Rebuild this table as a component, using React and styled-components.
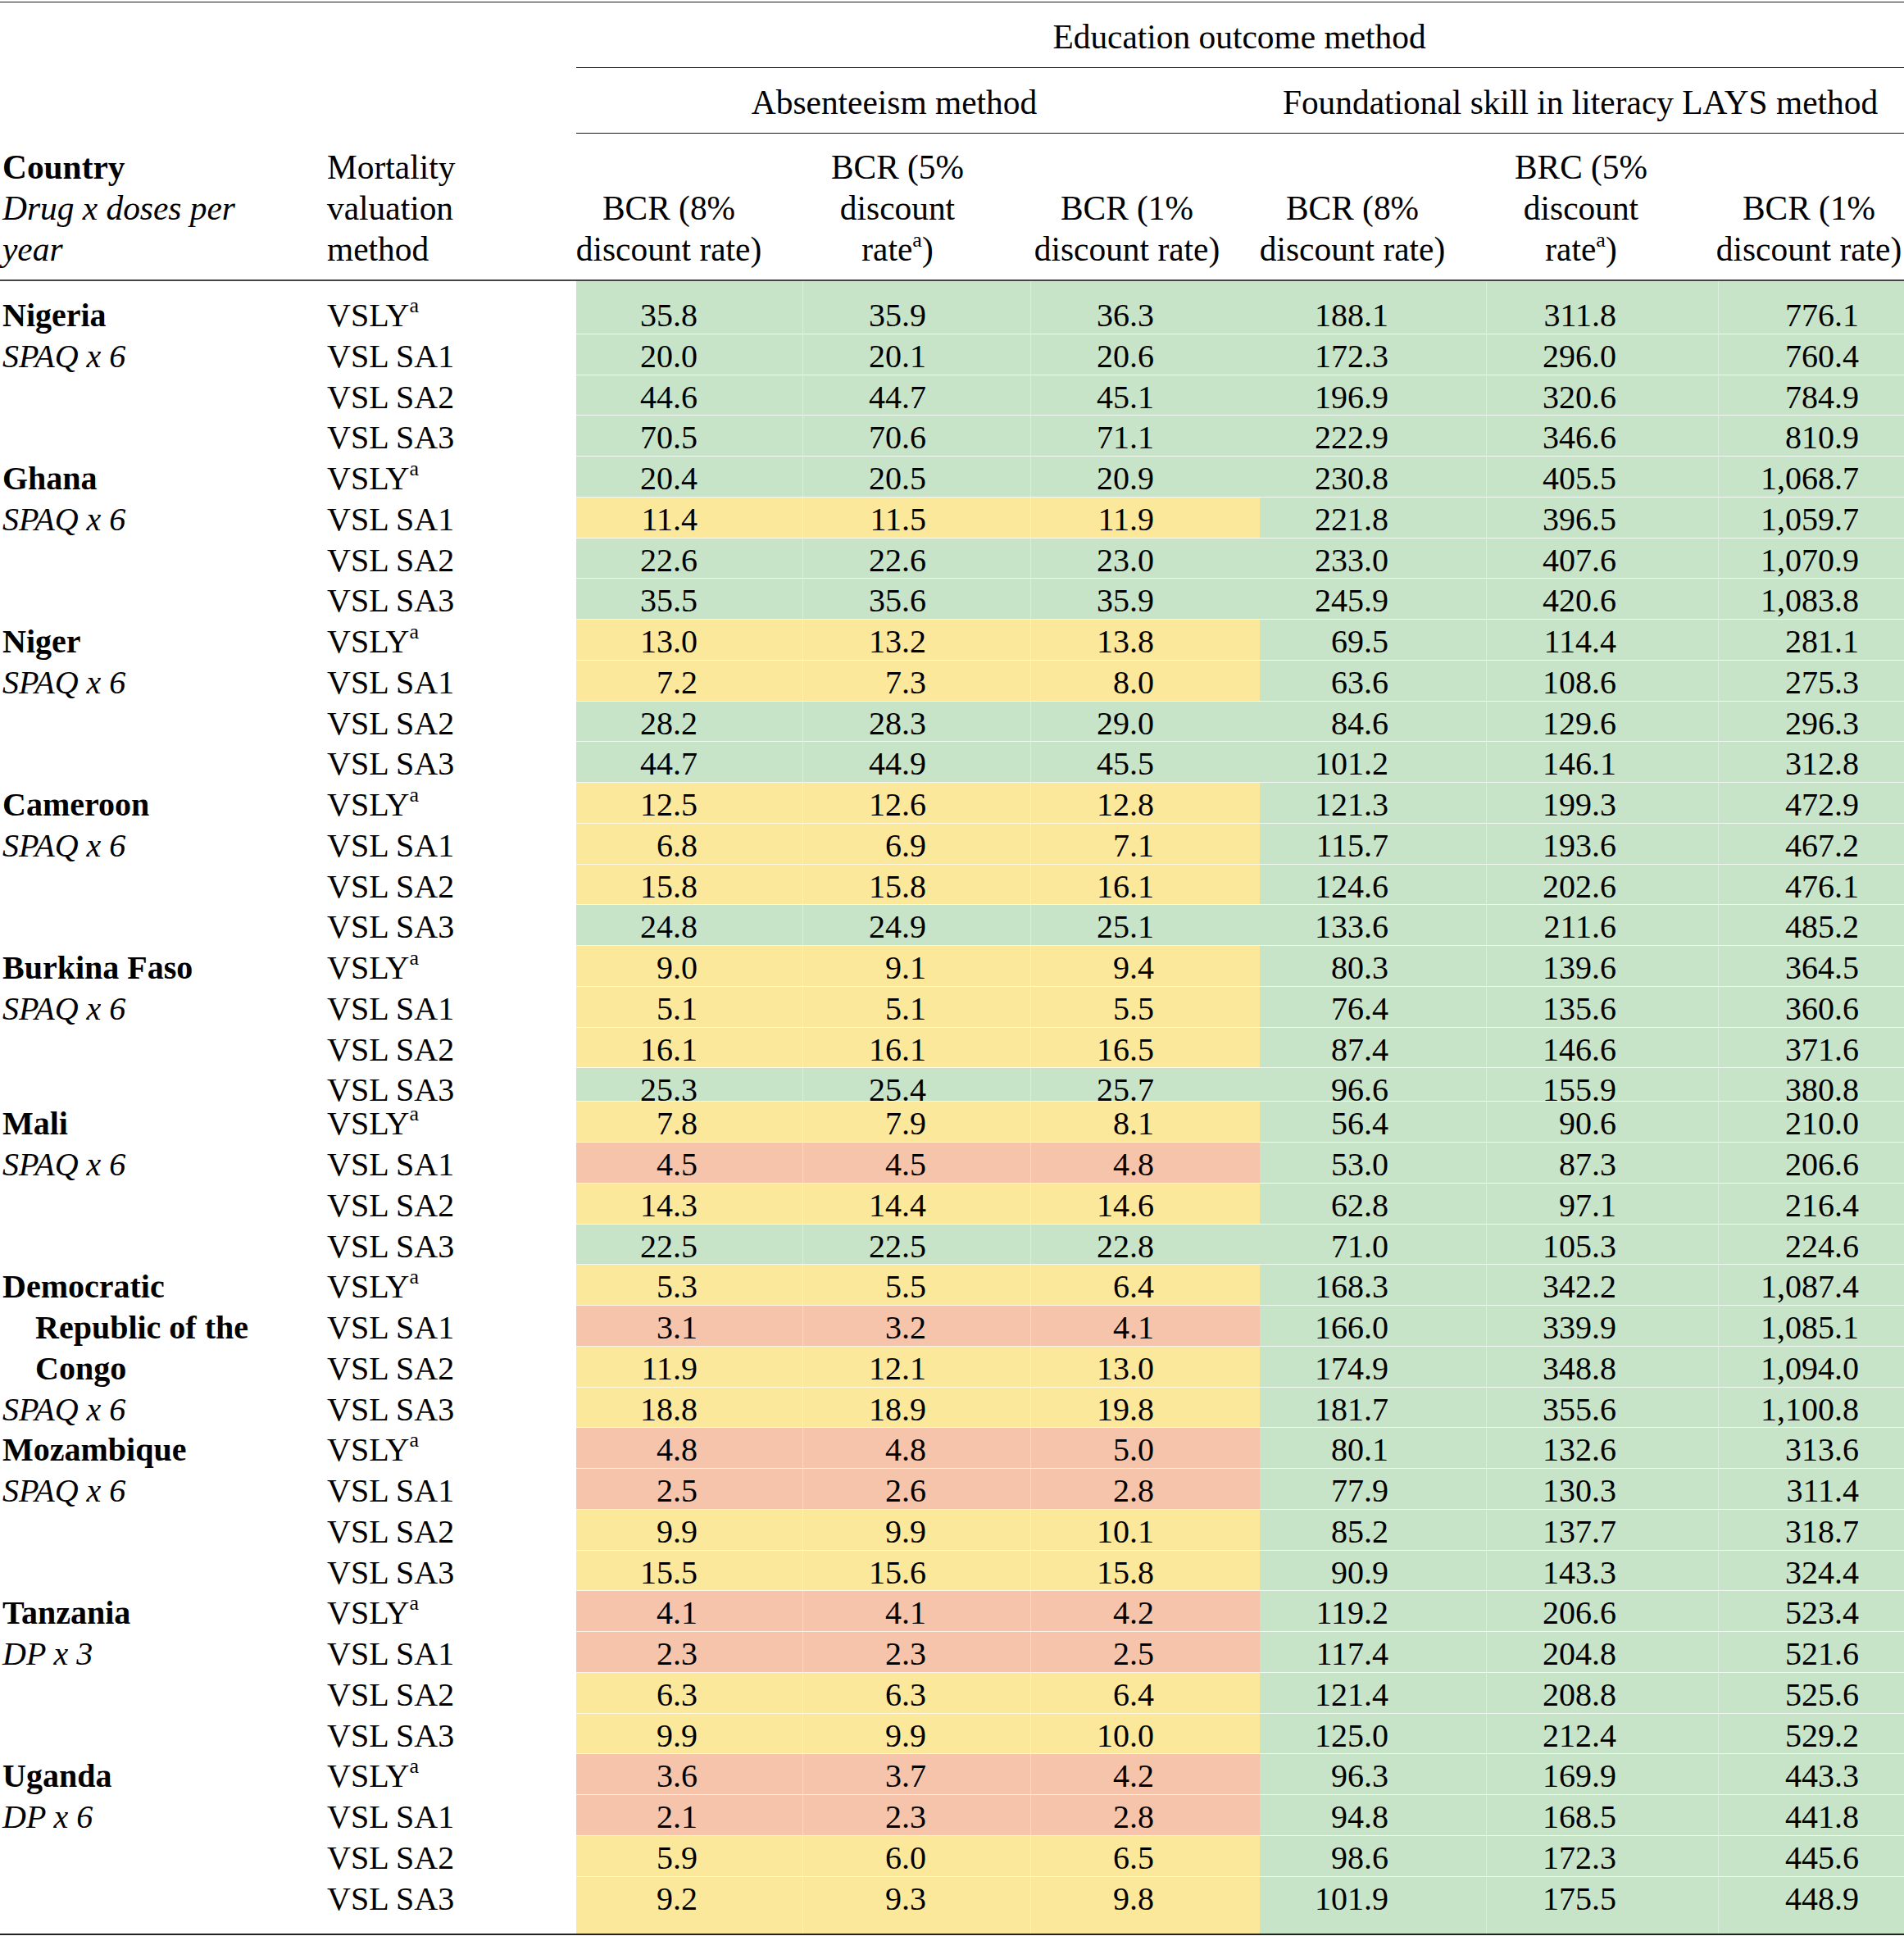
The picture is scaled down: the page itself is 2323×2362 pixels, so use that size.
import React from 'react'
import styled, { createGlobalStyle } from 'styled-components'

const GlobalStyle = createGlobalStyle`
  html, body {
    margin: 0;
    padding: 0;
    background: #fff;
  }
  body {
    font-family: "Liberation Serif", "Times New Roman", serif;
    color: #000;
  }
`

// column widths, taken off the reference
const COLS = '398px 305px 277px 278px 279px 277px 283px 226px'
const VALUE_PAD = [128, 127, 129, 119, 124, 55]
const HEAD_PAD = [51, 48, 45, 51, 53, 6]

const TONES = {
  G: '#c7e4c9',
  Y: '#fce89b',
  R: '#f5c4aa',
}

const Table = styled.div`
  width: 2323px;
  padding-top: 2px;
  font-size: 40px;
`

const Head = styled.div`
  display: grid;
  grid-template-columns: ${COLS};
  border-top: 1px solid #1a1a1a;
  border-bottom: 2px solid #454545;
  font-size: 41.4px;
`

const Spacer = styled.div`
  grid-column: 1 / 3;
`

const Group = styled.div`
  grid-column: ${p => p.$span};
  height: 80px;
  box-sizing: border-box;
  border-bottom: 1px solid #1a1a1a;
  display: flex;
  align-items: flex-end;
  justify-content: center;
  padding: 0 ${p => p.$pr || 0}px 12px 0;
  line-height: 50px;
  white-space: nowrap;
`

const ColHead = styled.div`
  height: 178px;
  box-sizing: border-box;
  display: flex;
  flex-direction: column;
  justify-content: flex-end;
  align-items: ${p => (p.$left ? 'flex-start' : 'center')};
  text-align: ${p => (p.$left ? 'left' : 'center')};
  padding: 0 ${p => p.$pr || 0}px 12px ${p => p.$pl || 0}px;
  line-height: 50px;
  white-space: nowrap;
`

const Strong = styled.span`
  font-weight: 700;
`

const Em = styled.span`
  font-style: italic;
`

const Sup = styled.span`
  font-size: 26px;
  line-height: 0;
  vertical-align: 17px;
`

const BodyRow = styled.div`
  display: grid;
  grid-template-columns: ${COLS};
  grid-template-rows: ${p => p.$h}px;
  height: ${p => p.$h}px;
`

const Cell = styled.div`
  box-sizing: border-box;
  padding-top: ${p => p.$pt}px;
  line-height: 44.75px;
  white-space: nowrap;
`

const CountryCell = styled(Cell)`
  padding-left: ${p => (p.$indent ? 43 : 3)}px;
  font-weight: ${p => (p.$kind === 'name' ? 700 : 400)};
  font-style: ${p => (p.$kind === 'drug' ? 'italic' : 'normal')};
`

const MethodCell = styled(Cell)`
  padding-left: 1px;
`

const ValueCell = styled(Cell)`
  background: ${p => TONES[p.$tone]};
  text-align: right;
  padding-right: ${p => p.$pr}px;
  border-bottom: ${p => (p.$last ? 'none' : '1px solid rgba(255,255,255,0.75)')};
  border-right: ${p => (p.$edge ? 'none' : '1px solid rgba(255,255,255,0.35)')};
`

const Foot = styled.div`
  border-top: 2px solid #222;
`

const std = name => drug => [
  { t: name, kind: 'name' },
  { t: drug, kind: 'drug' },
]

const countries = [
  {
    lines: std('Nigeria')('SPAQ x 6'),
    rows: [
      ['G', '35.8', '35.9', '36.3', '188.1', '311.8', '776.1'],
      ['G', '20.0', '20.1', '20.6', '172.3', '296.0', '760.4'],
      ['G', '44.6', '44.7', '45.1', '196.9', '320.6', '784.9'],
      ['G', '70.5', '70.6', '71.1', '222.9', '346.6', '810.9'],
    ],
  },
  {
    lines: std('Ghana')('SPAQ x 6'),
    rows: [
      ['G', '20.4', '20.5', '20.9', '230.8', '405.5', '1,068.7'],
      ['Y', '11.4', '11.5', '11.9', '221.8', '396.5', '1,059.7'],
      ['G', '22.6', '22.6', '23.0', '233.0', '407.6', '1,070.9'],
      ['G', '35.5', '35.6', '35.9', '245.9', '420.6', '1,083.8'],
    ],
  },
  {
    lines: std('Niger')('SPAQ x 6'),
    rows: [
      ['Y', '13.0', '13.2', '13.8', '69.5', '114.4', '281.1'],
      ['Y', '7.2', '7.3', '8.0', '63.6', '108.6', '275.3'],
      ['G', '28.2', '28.3', '29.0', '84.6', '129.6', '296.3'],
      ['G', '44.7', '44.9', '45.5', '101.2', '146.1', '312.8'],
    ],
  },
  {
    lines: std('Cameroon')('SPAQ x 6'),
    rows: [
      ['Y', '12.5', '12.6', '12.8', '121.3', '199.3', '472.9'],
      ['Y', '6.8', '6.9', '7.1', '115.7', '193.6', '467.2'],
      ['Y', '15.8', '15.8', '16.1', '124.6', '202.6', '476.1'],
      ['G', '24.8', '24.9', '25.1', '133.6', '211.6', '485.2'],
    ],
  },
  {
    lines: std('Burkina Faso')('SPAQ x 6'),
    rows: [
      ['Y', '9.0', '9.1', '9.4', '80.3', '139.6', '364.5'],
      ['Y', '5.1', '5.1', '5.5', '76.4', '135.6', '360.6'],
      ['Y', '16.1', '16.1', '16.5', '87.4', '146.6', '371.6'],
      ['G', '25.3', '25.4', '25.7', '96.6', '155.9', '380.8'],
    ],
  },
  {
    lines: std('Mali')('SPAQ x 6'),
    rows: [
      ['Y', '7.8', '7.9', '8.1', '56.4', '90.6', '210.0'],
      ['R', '4.5', '4.5', '4.8', '53.0', '87.3', '206.6'],
      ['Y', '14.3', '14.4', '14.6', '62.8', '97.1', '216.4'],
      ['G', '22.5', '22.5', '22.8', '71.0', '105.3', '224.6'],
    ],
  },
  {
    lines: [
      { t: 'Democratic', kind: 'name' },
      { t: 'Republic of the', kind: 'name', indent: true },
      { t: 'Congo', kind: 'name', indent: true },
      { t: 'SPAQ x 6', kind: 'drug' },
    ],
    rows: [
      ['Y', '5.3', '5.5', '6.4', '168.3', '342.2', '1,087.4'],
      ['R', '3.1', '3.2', '4.1', '166.0', '339.9', '1,085.1'],
      ['Y', '11.9', '12.1', '13.0', '174.9', '348.8', '1,094.0'],
      ['Y', '18.8', '18.9', '19.8', '181.7', '355.6', '1,100.8'],
    ],
  },
  {
    lines: std('Mozambique')('SPAQ x 6'),
    rows: [
      ['R', '4.8', '4.8', '5.0', '80.1', '132.6', '313.6'],
      ['R', '2.5', '2.6', '2.8', '77.9', '130.3', '311.4'],
      ['Y', '9.9', '9.9', '10.1', '85.2', '137.7', '318.7'],
      ['Y', '15.5', '15.6', '15.8', '90.9', '143.3', '324.4'],
    ],
  },
  {
    lines: std('Tanzania')('DP x 3'),
    rows: [
      ['R', '4.1', '4.1', '4.2', '119.2', '206.6', '523.4'],
      ['R', '2.3', '2.3', '2.5', '117.4', '204.8', '521.6'],
      ['Y', '6.3', '6.3', '6.4', '121.4', '208.8', '525.6'],
      ['Y', '9.9', '9.9', '10.0', '125.0', '212.4', '529.2'],
    ],
  },
  {
    lines: std('Uganda')('DP x 6'),
    rows: [
      ['R', '3.6', '3.7', '4.2', '96.3', '169.9', '443.3'],
      ['R', '2.1', '2.3', '2.8', '94.8', '168.5', '441.8'],
      ['Y', '5.9', '6.0', '6.5', '98.6', '172.3', '445.6'],
      ['Y', '9.2', '9.3', '9.8', '101.9', '175.5', '448.9'],
    ],
  },
]

const methods = [
  <>VSLY<Sup>a</Sup></>,
  'VSL SA1',
  'VSL SA2',
  'VSL SA3',
]

const colHeads = [
  ['BCR (8%', 'discount rate)'],
  ['BCR (5%', 'discount', 'rate*'],
  ['BCR (1%', 'discount rate)'],
  ['BCR (8%', 'discount rate)'],
  ['BRC (5%', 'discount', 'rate*'],
  ['BCR (1%', 'discount rate)'],
]

// row 0 has extra top room, the Burkina SA3 row is squeezed, the last one is tall
const rowShape = (i, total) => {
  if (i === 0) return { h: 64.75, pt: 20 }
  if (i === 19) return { h: 41, pt: 5 }
  if (i === total - 1) return { h: 69, pt: 5 }
  return { h: 49.75, pt: 5 }
}

const HeadLines = ({ lines }) =>
  lines.map((l, i) => (
    <React.Fragment key={i}>
      {i > 0 && <br />}
      {l === 'rate*' ? <>rate<Sup>a</Sup>)</> : l}
    </React.Fragment>
  ))

export default function App() {
  const flat = []
  countries.forEach(c => {
    c.rows.forEach((r, j) => {
      flat.push({ line: c.lines[j], method: methods[j], tone: r[0], values: r.slice(1) })
    })
  })

  return (
    <>
      <GlobalStyle />
      <Table>
        <Head>
          <Spacer />
          <Group $span="3 / 9" $pr={2}>Education outcome method</Group>
          <Spacer />
          <Group $span="3 / 6" $pr={58}>Absenteeism method</Group>
          <Group $span="6 / 9" $pr={4}>Foundational skill in literacy LAYS method</Group>
          <ColHead $left $pl={3}>
            <span>
              <Strong>Country</Strong>
              <br />
              <Em>Drug x doses per</Em>
              <br />
              <Em>year</Em>
            </span>
          </ColHead>
          <ColHead $left $pl={1}>
            <span>
              Mortality
              <br />
              valuation
              <br />
              method
            </span>
          </ColHead>
          {colHeads.map((lines, i) => (
            <ColHead key={i} $pr={HEAD_PAD[i]}>
              <span>
                <HeadLines lines={lines} />
              </span>
            </ColHead>
          ))}
        </Head>

        {flat.map((row, i) => {
          const { h, pt } = rowShape(i, flat.length)
          const last = i === flat.length - 1
          return (
            <BodyRow key={i} $h={h}>
              <CountryCell $pt={pt} $kind={row.line?.kind} $indent={row.line?.indent}>
                {row.line?.t}
              </CountryCell>
              <MethodCell $pt={pt}>{row.method}</MethodCell>
              {row.values.map((v, k) => (
                <ValueCell
                  key={k}
                  $pt={pt}
                  $tone={k < 3 ? row.tone : 'G'}
                  $pr={VALUE_PAD[k]}
                  $edge={k === 2 || k === 5}
                  $last={last}
                >
                  {v}
                </ValueCell>
              ))}
            </BodyRow>
          )
        })}
        <Foot />
      </Table>
    </>
  )
}
